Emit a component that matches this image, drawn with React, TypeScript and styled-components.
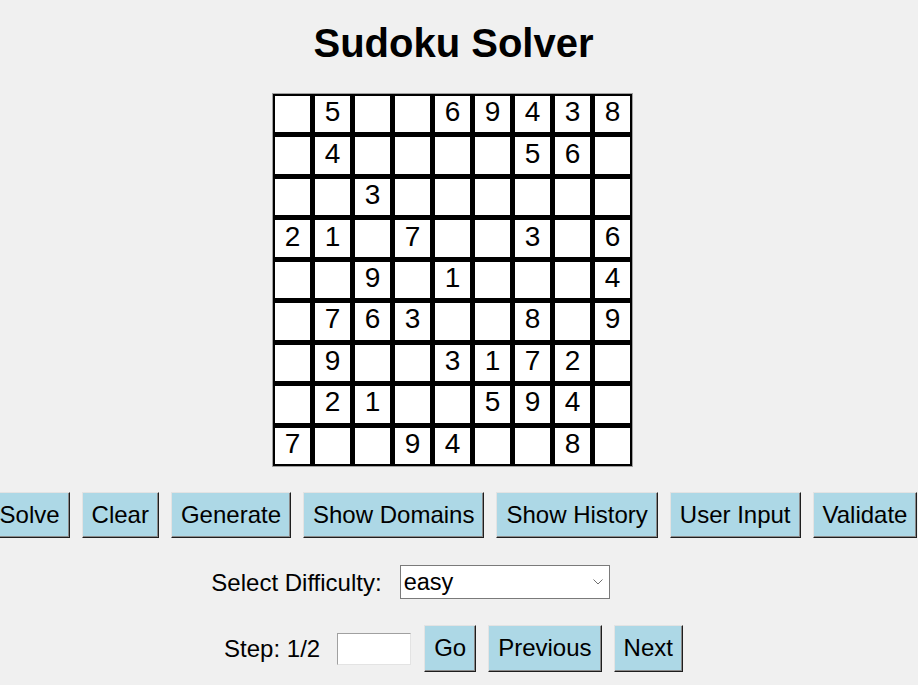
import React from "react";
import styled, { createGlobalStyle } from "styled-components";

const GlobalStyle = createGlobalStyle`
  html, body {
    margin: 0;
    padding: 0;
    background: #f0f0f0;
    overflow: hidden;
  }
  body {
    font-family: "Liberation Sans", Arial, sans-serif;
    color: #000;
  }
`;

const Page = styled.div`
  width: 907px;
  height: 685px;
  display: flex;
  flex-direction: column;
  align-items: center;
`;

const Title = styled.h1`
  margin: 20px 0 0;
  font-size: 40px;
  line-height: 46px;
  font-weight: bold;
`;

const Board = styled.div`
  margin-top: 27px;
  margin-right: 2px;
  border: 1px solid #a0a0a0;
  background: #000;
  padding: 2px;
  width: 355px;
  height: 368px;
  display: grid;
  grid-template-columns: repeat(9, 35px);
  grid-template-rows: repeat(9, 1fr);
  gap: 5px;
`;

const Cell = styled.div`
  background: #fff;
  display: flex;
  align-items: center;
  justify-content: center;
  font-size: 28px;
  line-height: 1;
  padding-bottom: 4px;
  box-sizing: border-box;
`;

const ButtonRow = styled.div`
  margin-top: 25px;
  display: flex;
  gap: 12px;
  flex-shrink: 0;
`;

const Button = styled.button`
  height: 46px;
  box-sizing: border-box;
  padding: 0 9px 1px;
  background: #add8e6;
  font-family: "Liberation Sans", Arial, sans-serif;
  font-size: 24px;
  color: #000;
  white-space: nowrap;
  flex-shrink: 0;
  border: 1px solid;
  border-color: #e3e3e3 #1e1e1e #1e1e1e #e3e3e3;
  box-shadow: inset -1px -1px 0 #8a8a8a;
  border-radius: 0;
  cursor: pointer;
`;

const SelectRow = styled.div`
  margin-top: 27px;
  margin-right: 86px;
  display: flex;
  align-items: center;
  gap: 18px;
`;

const Label = styled.span`
  font-size: 24px;
  line-height: 27px;
`;

const Combo = styled.div`
  width: 210px;
  height: 34px;
  box-sizing: border-box;
  border: 1px solid #7a7a7a;
  background: #fff;
  display: flex;
  align-items: center;
  justify-content: space-between;
  padding: 0 6px 0 3px;
  font-size: 23.5px;
`;

const StepRow = styled.div`
  margin-top: 26px;
  display: flex;
  align-items: center;
  gap: 12px;
`;

const StepLabel = styled(Label)`
  margin-right: 5px;
`;

const StepInput = styled.input`
  width: 74px;
  height: 32px;
  box-sizing: border-box;
  border: 1px solid;
  border-color: #a0a0a0 #e3e3e3 #e3e3e3 #a0a0a0;
  background: #fff;
  margin-right: 1px;
  font-size: 20px;
  outline: none;
`;

const StepButton = styled(Button)`
  height: 47px;
`;

const board: string[] = [
  " 5  69438",
  " 4    56 ",
  "  3      ",
  "21 7  3 6",
  "  9 1   4",
  " 763  8 9",
  " 9  3172 ",
  " 21  594 ",
  "7  94  8 ",
];

const actions = [
  "Solve",
  "Clear",
  "Generate",
  "Show Domains",
  "Show History",
  "User Input",
  "Validate",
];

export default function App() {
  return (
    <>
      <GlobalStyle />
      <Page>
        <Title>Sudoku Solver</Title>
        <Board>
          {board.flatMap((row, r) =>
            row.split("").map((ch, c) => (
              <Cell key={`${r}-${c}`}>{ch.trim()}</Cell>
            ))
          )}
        </Board>
        <ButtonRow>
          {actions.map((a) => (
            <Button key={a}>{a}</Button>
          ))}
        </ButtonRow>
        <SelectRow>
          <Label>Select Difficulty:</Label>
          <Combo>
            <span>easy</span>
            <svg width="10" height="6" viewBox="0 0 10 6">
              <path d="M0.5 0.5 L5 5 L9.5 0.5" fill="none" stroke="#707070" strokeWidth="1" />
            </svg>
          </Combo>
        </SelectRow>
        <StepRow>
          <StepLabel>Step: 1/2</StepLabel>
          <StepInput />
          <StepButton>Go</StepButton>
          <StepButton>Previous</StepButton>
          <StepButton>Next</StepButton>
        </StepRow>
      </Page>
    </>
  );
}
